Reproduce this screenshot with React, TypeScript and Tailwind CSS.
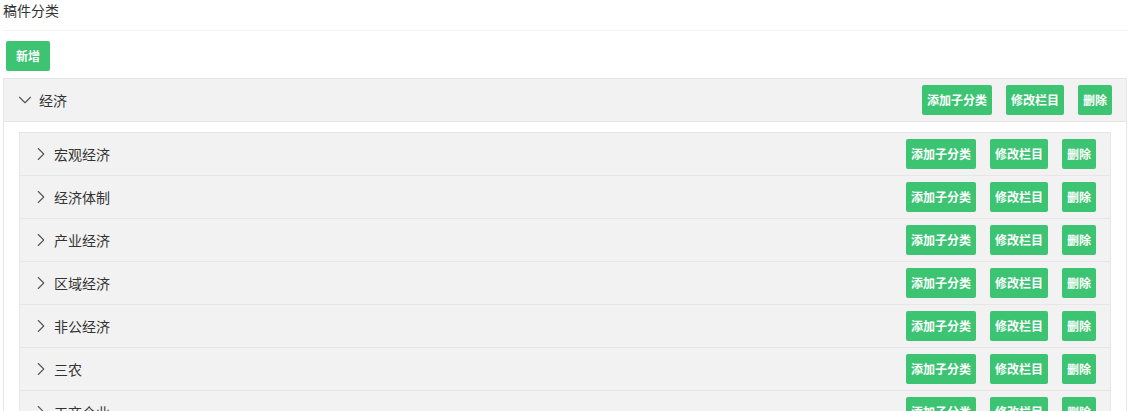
import { ChevronDown, ChevronRight } from "lucide-react";

const children = ["宏观经济", "经济体制", "产业经济", "区域经济", "非公经济", "三农", "工商企业"];

function Actions() {
  return (
    <div className="flex items-center gap-[14px]">
      <button className="h-[30px] px-[5px] rounded-[2px] bg-[#3cc473] text-white text-[12px] font-bold">添加子分类</button>
      <button className="h-[30px] px-[5px] rounded-[2px] bg-[#3cc473] text-white text-[12px] font-bold">修改栏目</button>
      <button className="h-[30px] px-[5px] rounded-[2px] bg-[#3cc473] text-white text-[12px] font-bold">删除</button>
    </div>
  );
}

export default function App() {
  return (
    <div
      className="w-[1131px] h-[411px] overflow-hidden bg-white text-[#333] px-[3px]"
      style={{ fontFamily: '"Noto Sans CJK SC", "Noto Sans", sans-serif' }}
    >
      <div className="h-[31px] border-b border-[#f4f4f4] text-[14px] leading-[20px]">稿件分类</div>
      <div className="pt-[10px] pl-[3px]">
        <button className="h-[30px] w-[44px] rounded-[2px] bg-[#3cc473] text-white text-[12px] font-bold">新增</button>
      </div>
      <div className="mt-[7px] mr-[1px] border border-[#e6e6e6]">
        <div className="h-[43px] flex items-center justify-between bg-[#f2f2f2] pl-[10px] pr-[14px] border-b border-[#e6e6e6]">
          <div className="flex items-center gap-[3px] text-[14px]">
            <ChevronDown size={22} strokeWidth={1.2} className="text-[#555]" />
            <span>经济</span>
          </div>
          <Actions />
        </div>
        <div className="pt-[10px] px-[15px]">
          <div className="border border-[#e6e6e6]">
            {children.map((c) => (
              <div
                key={c}
                className="h-[43px] flex items-center justify-between bg-[#f2f2f2] pl-[10px] pr-[14px] border-b border-[#e6e6e6]"
              >
                <div className="flex items-center gap-[2px] text-[14px]">
                  <ChevronRight size={22} strokeWidth={1.2} className="text-[#555]" />
                  <span>{c}</span>
                </div>
                <Actions />
              </div>
            ))}
          </div>
        </div>
      </div>
    </div>
  );
}
